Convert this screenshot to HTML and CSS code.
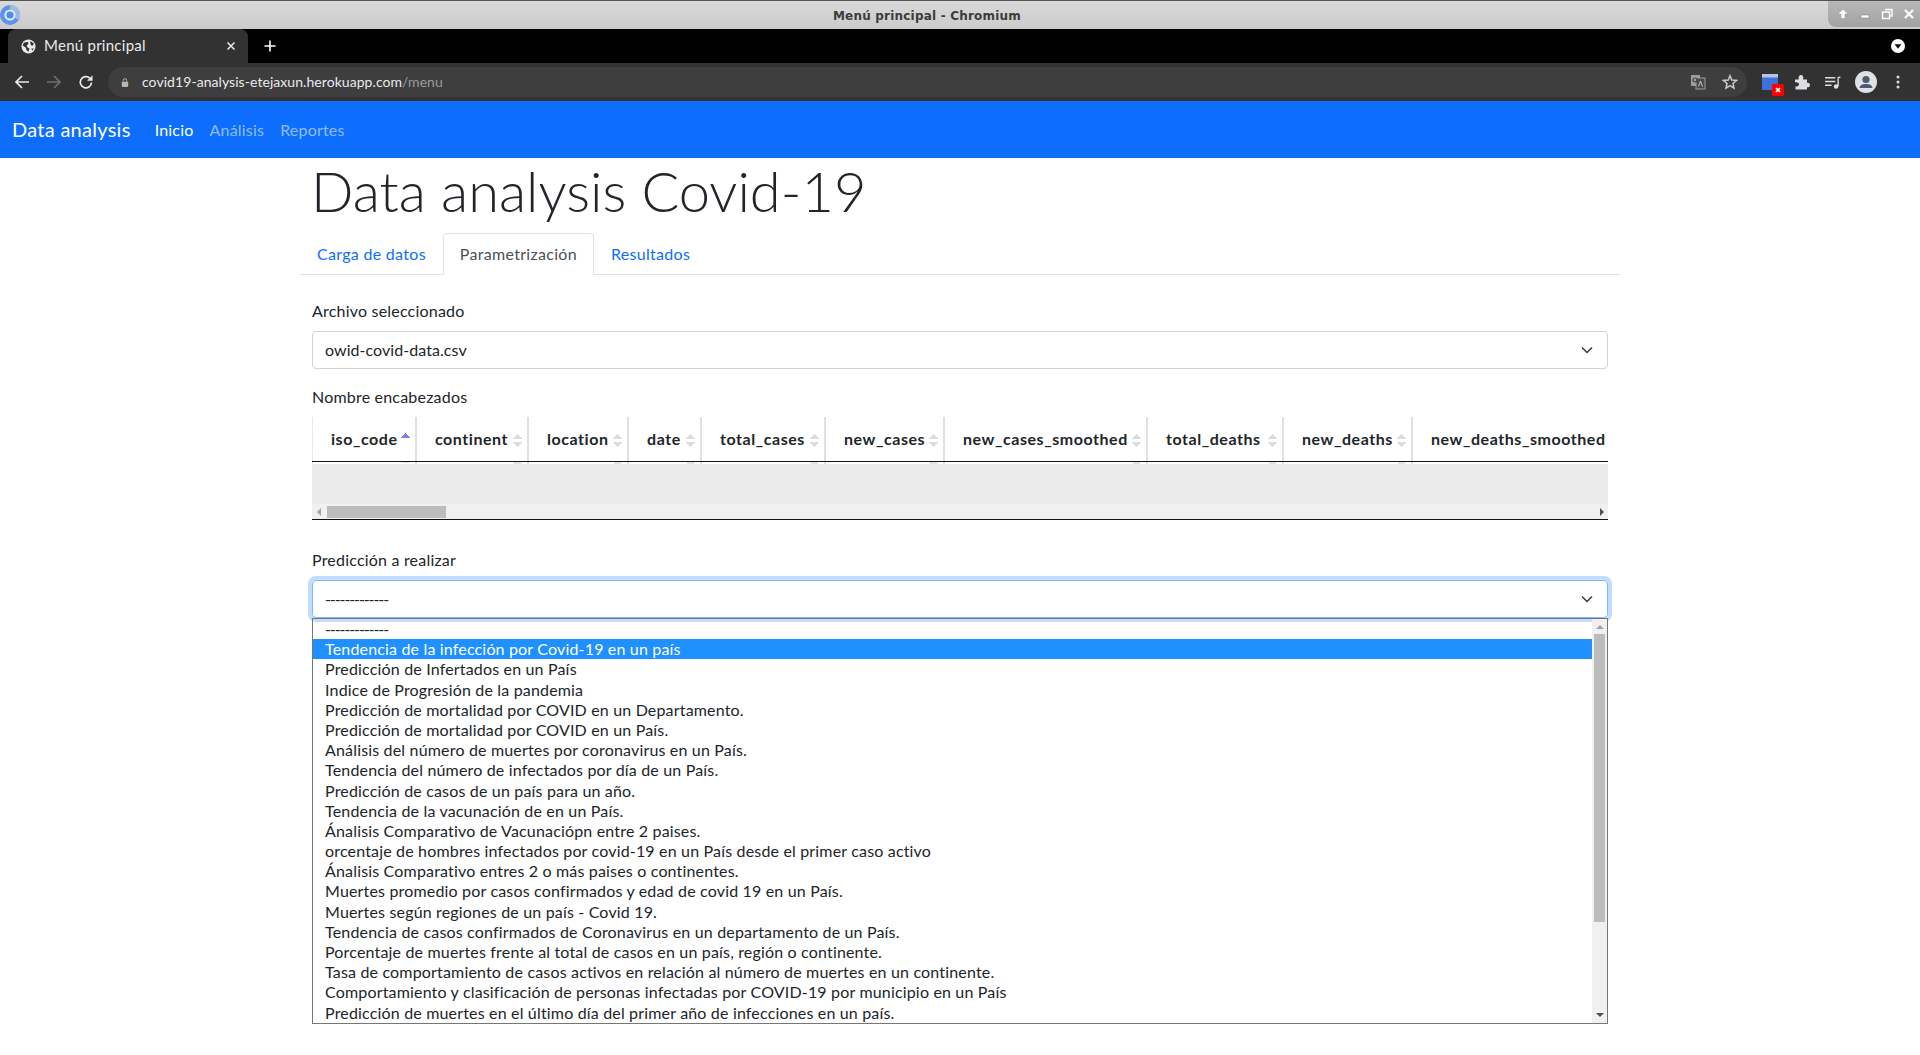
FILE: index.html
```html
<!DOCTYPE html>
<html lang="es">
<head>
    <meta charset="UTF-8">
    <title>Menú principal</title>
    <link rel="stylesheet" href="styles.css">
</head>
<body>

<div class="titlebar">
    <svg class="app-logo" viewBox="0 0 20 20"><circle cx="10" cy="10" r="10" fill="#5c93ee"/><path d="M10 0 A10 10 0 0 1 18.7 15 L10 10 Z" fill="#9db9e6"/><circle cx="10" cy="10" r="5.6" fill="#e4e9f2"/><circle cx="10" cy="10" r="3.6" fill="#4d8df0"/></svg>
    <span class="window-title">Menú principal - Chromium</span>
    <div class="window-btns">
        <svg viewBox="0 0 12 12"><path d="M6 1 L11 6 H8 V10.5 H4 V6 H1 Z" fill="#fff" stroke="#8a8a8a" stroke-width=".4"/></svg>
        <svg viewBox="0 0 12 12"><rect x="2" y="7" width="8" height="3" fill="#fff" stroke="#777" stroke-width=".5"/></svg>
        <svg viewBox="0 0 12 12"><path d="M4 1.5 H11 V8 H8.5 M1.5 4 H8.5 V10.5 H1.5 Z" fill="none" stroke="#fff" stroke-width="1.4"/></svg>
        <svg viewBox="0 0 12 12"><path d="M2 2 L10 10 M10 2 L2 10" stroke="#fff" stroke-width="2.2"/></svg>
    </div>
</div>

<div class="tabstrip">
    <div class="tab">
        <svg class="tab-globe" viewBox="0 0 16 16"><circle cx="8" cy="8" r="7.5" fill="#e8eaed"/><path d="M3 4 L7 2.8 L8 5 L6 7 L7 9 L9 10 L8 13.5 L6 12 L5 9 L1.8 7 Z M10 2 L13.5 4.5 L13 7 L11 7 L10 5 Z M11 10 L13.5 10 L12 12.5 Z" fill="#323232"/></svg>
        <span class="tab-title">Menú principal</span>
        <svg class="tab-close" viewBox="0 0 10 10"><path d="M1.5 1.5 L8.5 8.5 M8.5 1.5 L1.5 8.5" stroke="#e8eaed" stroke-width="1.5"/></svg>
    </div>
    <svg class="new-tab" viewBox="0 0 12 12"><path d="M6 0.5 V11.5 M0.5 6 H11.5" stroke="#fff" stroke-width="1.6"/></svg>
    <svg class="tab-search" viewBox="0 0 16 16"><circle cx="8" cy="8" r="8" fill="#fff"/><path d="M4 6 H12 L8 11 Z" fill="#111"/></svg>
</div>

<div class="toolbar">
    <svg class="tool-icon" viewBox="0 0 16 16"><path d="M15 8 H2 M8 2 L2 8 L8 14" fill="none" stroke="#e8eaed" stroke-width="1.7"/></svg>
    <svg class="tool-icon" viewBox="0 0 16 16"><path d="M1 8 H14 M8 2 L14 8 L8 14" fill="none" stroke="#6f7072" stroke-width="1.7"/></svg>
    <svg class="tool-icon" viewBox="0 0 16 16"><path d="M13.5 8.5 A5.6 5.6 0 1 1 11.8 4.2" fill="none" stroke="#e8eaed" stroke-width="1.7"/><path d="M14.5 1.2 V6.8 H9 Z" fill="#e8eaed"/></svg>
    <div class="omnibox">
        <svg class="lock" viewBox="0 0 10 12"><path d="M2.8 5 V3.4 A2.2 2.2 0 0 1 7.2 3.4 V5" fill="none" stroke="#b5b7ba" stroke-width="1.2"/><rect x="1" y="5" width="8" height="6.5" rx="1" fill="#b5b7ba"/></svg>
        <span class="url">covid19-analysis-etejaxun.herokuapp.com<span class="url-path">/menu</span></span>
        <svg class="omni-icon" viewBox="0 0 16 16"><rect x="1" y="1" width="9" height="11" fill="#9a9c9f"/><rect x="6" y="4" width="9" height="11" fill="#4a4a4a" stroke="#9a9c9f"/><path d="M8.5 12.5 L10.5 7 L12.5 12.5" fill="none" stroke="#c5c7ca"/><circle cx="5" cy="6" r="2" fill="none" stroke="#444" stroke-width="1.2"/></svg>
        <svg class="omni-icon star" viewBox="0 0 16 16"><path d="M8 1.8 L9.8 6.1 L14.5 6.5 L11 9.5 L12 14.1 L8 11.7 L4 14.1 L5 9.5 L1.5 6.5 L6.2 6.1 Z" fill="none" stroke="#c8cacd" stroke-width="1.5"/></svg>
    </div>
    <svg class="ext-icon" viewBox="0 0 22 22"><rect x="0" y="0" width="16" height="16" fill="#3f6fd8"/><rect x="0" y="0" width="16" height="3.5" fill="#b4c4e2"/><rect x="10" y="10" width="12" height="12" rx="1.5" fill="#f00"/><path d="M14 14 L18 18 M18 14 L14 18" stroke="#fff" stroke-width="1.6"/></svg>
    <svg class="puzzle" viewBox="0 0 16 16"><path d="M1 5.5 H4.8 C4.2 3 5.2 1 7 1 C8.8 1 9.8 3 9.2 5.5 H13 V8.8 C15 8.2 16 9.6 16 11 C16 12.4 15 13.8 13 13.2 V15.5 H1.5 V12.2 C3.6 12.8 5 11.8 5 10.3 C5 8.8 3.4 7.8 1 8.4 Z" fill="#dcdee1"/></svg>
    <svg class="media" viewBox="0 0 18 16"><path d="M1 3 H12 M1 7 H12 M1 11 H8" stroke="#dcdee1" stroke-width="1.5"/><path d="M15 2.5 V12" stroke="#dcdee1" stroke-width="1.5"/><path d="M15 2.5 H17.5" stroke="#dcdee1" stroke-width="1.5"/><circle cx="12.8" cy="12.3" r="2.4" fill="#dcdee1"/></svg>
    <svg class="avatar" viewBox="0 0 22 22"><circle cx="11" cy="11" r="11" fill="#dfe1e5"/><circle cx="11" cy="8.5" r="3.6" fill="#4d5b70"/><path d="M4.5 17 C5 13.5 8 13 11 13 C14 13 17 13.5 17.5 17 Z" fill="#4d5b70"/></svg>
    <svg class="kebab" viewBox="0 0 4 16"><circle cx="2" cy="3" r="1.5" fill="#dcdee1"/><circle cx="2" cy="8" r="1.5" fill="#dcdee1"/><circle cx="2" cy="13" r="1.5" fill="#dcdee1"/></svg>
</div>

<nav class="navbar">
    <a class="brand">Data analysis</a>
    <a class="nav-link active">Inicio</a>
    <a class="nav-link">Análisis</a>
    <a class="nav-link">Reportes</a>
</nav>

<main class="container">
    <h1>Data analysis Covid-19</h1>

    <div class="tabs">
        <a class="tab-link">Carga de datos</a>
        <a class="tab-link current">Parametrización</a>
        <a class="tab-link">Resultados</a>
    </div>

    <div class="form-panel">
        <label class="field-label">Archivo seleccionado</label>
        <div class="select-box">
            <span class="select-value">owid-covid-data.csv</span>
            <svg class="chevron" viewBox="0 0 16 16"><path d="M3 5.5 L8 10.5 L13 5.5" fill="none" stroke="#343a40" stroke-width="1.5"/></svg>
        </div>

        <label class="field-label second">Nombre encabezados</label>
        <div class="data-table">
            <div class="head-row">
                <div class="th">iso_code<span class="sort asc"></span></div>
                <div class="th">continent<span class="sort"></span></div>
                <div class="th">location<span class="sort"></span></div>
                <div class="th">date<span class="sort"></span></div>
                <div class="th">total_cases<span class="sort"></span></div>
                <div class="th">new_cases<span class="sort"></span></div>
                <div class="th">new_cases_smoothed<span class="sort"></span></div>
                <div class="th">total_deaths<span class="sort"></span></div>
                <div class="th">new_deaths<span class="sort"></span></div>
                <div class="th last">new_deaths_smoothed</div>
            </div>
            <div class="empty-body"></div>
            <div class="h-scroll">
                <span class="arrow-left"></span>
                <span class="h-thumb"></span>
                <span class="arrow-right"></span>
            </div>
        </div>

        <label class="field-label third">Predicción a realizar</label>
        <div class="select-box focused">
            <span class="select-value dashes">-------------</span>
            <svg class="chevron" viewBox="0 0 16 16"><path d="M3 5.5 L8 10.5 L13 5.5" fill="none" stroke="#343a40" stroke-width="1.5"/></svg>
        </div>
        <div class="listbox">
            <ul class="options">
                <li class="dashes">-------------</li>
                <li class="selected">Tendencia de la infección por Covid-19 en un país</li>
                <li>Predicción de Infertados en un País</li>
                <li>Indice de Progresión de la pandemia</li>
                <li>Predicción de mortalidad por COVID en un Departamento.</li>
                <li>Predicción de mortalidad por COVID en un País.</li>
                <li>Análisis del número de muertes por coronavirus en un País.</li>
                <li>Tendencia del número de infectados por día de un País.</li>
                <li>Predicción de casos de un país para un año.</li>
                <li>Tendencia de la vacunación de en un País.</li>
                <li>Ánalisis Comparativo de Vacunaciópn entre 2 paises.</li>
                <li>orcentaje de hombres infectados por covid-19 en un País desde el primer caso activo</li>
                <li>Ánalisis Comparativo entres 2 o más paises o continentes.</li>
                <li>Muertes promedio por casos confirmados y edad de covid 19 en un País.</li>
                <li>Muertes según regiones de un país - Covid 19.</li>
                <li>Tendencia de casos confirmados de Coronavirus en un departamento de un País.</li>
                <li>Porcentaje de muertes frente al total de casos en un país, región o continente.</li>
                <li>Tasa de comportamiento de casos activos en relación al número de muertes en un continente.</li>
                <li>Comportamiento y clasificación de personas infectadas por COVID-19 por municipio en un País</li>
                <li>Predicción de muertes en el último día del primer año de infecciones en un país.</li>
            </ul>
            <div class="v-scroll">
                <span class="arrow-up"></span>
                <span class="v-thumb"></span>
                <span class="arrow-down"></span>
            </div>
        </div>
    </div>
</main>

</body>
</html>
```

FILE: styles.css
```css
* {
    box-sizing: border-box;
}

html, body {
    margin: 0;
    height: 1055px;
    overflow: hidden;
}

body {
    font-family: 'Lato', 'Noto Sans', sans-serif;
    font-size: 16px;
    color: #212529;
    background-color: #fff;
}

/* browser chrome */
.titlebar {
    height: 29px;
    display: flex;
    align-items: center;
    justify-content: center;
    position: relative;
    padding: 1px 66px 0 0;
    border-top: 1px solid #555;
    background: linear-gradient(#d9d9d9, #cbcbcb);
}

.app-logo {
    position: absolute;
    left: 0;
    top: 4px;
    width: 20px;
    height: 20px;
}

.window-title {
    font-family: 'DejaVu Sans', sans-serif;
    font-size: 12px;
    font-weight: bold;
    color: #3c3c3c;
    letter-spacing: 0.2px;
}

.window-btns {
    position: absolute;
    right: 0;
    top: 0;
    width: 92px;
    height: 26px;
    display: flex;
    align-items: center;
    gap: 10px;
    padding-left: 9px;
    background: linear-gradient(#b8b8b8, #a2a2a2);
    border-bottom-left-radius: 8px;
}

.window-btns svg {
    width: 12px;
    height: 12px;
}

.tabstrip {
    height: 34px;
    background-color: #000;
    display: flex;
    align-items: flex-end;
    position: relative;
    padding-left: 8px;
}

.tab {
    width: 240px;
    height: 34px;
    background-color: #323232;
    border-radius: 8px 8px 0 0;
    display: flex;
    align-items: center;
    padding: 0 12px;
}

.tab-globe {
    width: 15px;
    height: 15px;
    margin-left: 1px;
}

.tab-title {
    font-size: 15px;
    color: #e8eaed;
    margin: 0 0 2px 8px;
    letter-spacing: 0.26px;
    flex: 1;
}

.tab-close {
    width: 10px;
    height: 10px;
}

.new-tab {
    width: 12px;
    height: 12px;
    margin: 0 0 11px 16px;
}

.tab-search {
    position: absolute;
    right: 15px;
    top: 10px;
    width: 14px;
    height: 14px;
}

.toolbar {
    height: 38px;
    background-color: #323232;
    display: flex;
    align-items: center;
    padding-left: 14px;
}

.tool-icon {
    width: 16px;
    height: 16px;
    margin-right: 16px;
}

.omnibox {
    width: 1639px;
    height: 30px;
    margin-left: -2px;
    background-color: #3e3e3e;
    border-radius: 15px;
    display: flex;
    align-items: center;
    padding-left: 13px;
    padding-right: 9px;
}

.lock {
    width: 8px;
    height: 11px;
}

.url {
    font-size: 14px;
    color: #e8eaed;
    margin: 0 0 2px 13px;
    letter-spacing: 0.06px;
    flex: 1;
}

.url-path {
    color: #9a9c9f;
}

.omni-icon {
    width: 16px;
    height: 16px;
    margin-right: 16px;
}

.omni-icon.star {
    margin-right: 0;
}

.ext-icon {
    width: 22px;
    height: 22px;
    margin: 6px 0 0 15px;
}

.puzzle {
    width: 16px;
    height: 16px;
    margin-left: 10px;
}

.media {
    width: 17px;
    height: 15px;
    margin-left: 14px;
}

.avatar {
    width: 22px;
    height: 22px;
    margin-left: 14px;
}

.kebab {
    width: 4px;
    height: 16px;
    margin-left: 19px;
}

/* page */
.navbar {
    height: 57px;
    background-color: #0d6efd;
    display: flex;
    align-items: center;
    padding-left: 12px;
}

.brand {
    font-size: 20px;
    letter-spacing: 0.28px;
    color: #fff;
    margin: 0 16px 2px 0;
}

.nav-link {
    padding: 0 8px;
    letter-spacing: 0.2px;
    color: rgba(255, 255, 255, 0.55);
}

.nav-link.active {
    color: #fff;
}

.container {
    width: 1320px;
    margin: 0 auto;
}

h1 {
    margin: 0 0 0 11px;
    font-size: 56px;
    font-weight: 300;
    line-height: 65px;
    height: 75px;
}

.tabs {
    display: flex;
    height: 42px;
    border-bottom: 1px solid #dee2e6;
}

.tab-link {
    padding: 0 16px;
    line-height: 40px;
    letter-spacing: 0.3px;
    color: #0d6efd;
    border: 1px solid transparent;
    border-bottom: 0;
    height: 42px;
}

.tab-link.current {
    color: #495057;
    background-color: #fff;
    border-color: #dee2e6;
    border-radius: 4px 4px 0 0;
}

.form-panel {
    padding: 24px 12px 0 12px;
}

.field-label {
    display: block;
    height: 32px;
    line-height: 24px;
    letter-spacing: 0.2px;
}

.field-label.second {
    margin-top: 16px;
}

.field-label.third {
    margin-top: 28px;
}

.select-box {
    height: 38px;
    border: 1px solid #ced4da;
    border-radius: 4px;
    display: flex;
    align-items: center;
    justify-content: space-between;
    padding: 0 12px;
}

.select-box.focused {
    border-color: #86b7fe;
    box-shadow: 0 0 0 4px rgba(13, 110, 253, 0.25);
}

.select-value {
    letter-spacing: 0.06px;
    margin-bottom: 2px;
}

.select-value.dashes {
    letter-spacing: -1.1px;
}

.chevron {
    width: 16px;
    height: 16px;
}

.data-table {
    height: 103px;
    border-bottom: 1px solid #111;
}

.head-row {
    display: grid;
    grid-template-columns: 104px 112px 100px 73px 124px 119px 203px 136px 129px 1fr;
    height: 47px;
    position: relative;
    border-left: 1px solid #e8e8e8;
}

.head-row::after {
    content: '';
    position: absolute;
    left: -1px;
    right: 0;
    top: 44px;
    height: 1px;
    background-color: #111;
}

.th {
    font-weight: bold;
    line-height: 44px;
    letter-spacing: 0.55px;
    padding-left: 18px;
    position: relative;
    white-space: nowrap;
    border-right: 2px solid #dee2e6;
}

.th:first-child {
    padding-left: 18px;
}

.th.last {
    border-right: 0;
    padding-left: 18px;
    overflow: hidden;
}

.sort {
    position: absolute;
    right: 5px;
    top: 16px;
    width: 9px;
    height: 15px;
    background:
        linear-gradient(to bottom right, transparent 50%, #dcdcdc 50%) 0 0 / 5px 6px no-repeat,
        linear-gradient(to bottom left, transparent 50%, #dcdcdc 50%) 4px 0 / 5px 6px no-repeat,
        linear-gradient(to top right, transparent 50%, #dcdcdc 50%) 0 9px / 5px 6px no-repeat,
        linear-gradient(to top left, transparent 50%, #dcdcdc 50%) 4px 9px / 5px 6px no-repeat;
}

.sort::after {
    content: '';
    position: absolute;
    left: 1px;
    right: 1px;
    top: 29px;
    height: 2px;
    background-color: #e4e4e4;
}

.sort.asc {
    top: 15px;
    height: 7px;
    background:
        linear-gradient(to bottom right, transparent 50%, #7a80e0 50%) 0 0 / 5px 6px no-repeat,
        linear-gradient(to bottom left, transparent 50%, #7a80e0 50%) 4px 0 / 5px 6px no-repeat;
}

.empty-body {
    height: 40px;
    background-color: #ebebeb;
}

.h-scroll {
    height: 15px;
    background-color: #f0f0f0;
    display: flex;
    align-items: center;
    padding: 0 4px 0 5px;
}

.h-thumb {
    width: 119px;
    height: 12px;
    margin-left: 6px;
    background-color: #bcbcbc;
}

.arrow-left, .arrow-right, .arrow-up, .arrow-down {
    width: 0;
    height: 0;
    border: 4px solid transparent;
}

.arrow-left {
    border-left-width: 0;
    border-right-color: #a3a3a3;
}

.arrow-right {
    border-right-width: 0;
    border-left-color: #505050;
    margin-left: auto;
}

.listbox {
    height: 406px;
    border: 1px solid #767676;
    display: flex;
}

.options {
    list-style: none;
    margin: 0;
    padding: 0;
    flex: 1;
    letter-spacing: 0.17px;
}

.options li {
    height: 20.2px;
    line-height: 19px;
    padding-left: 12px;
    white-space: nowrap;
}

.options li.dashes {
    letter-spacing: -1.1px;
}

.options li.selected {
    background-color: #1e90ff;
    color: #fff;
}

.v-scroll {
    width: 15px;
    background-color: #f0f0f0;
    display: flex;
    flex-direction: column;
    align-items: center;
    padding: 6px 0;
}

.v-thumb {
    width: 11px;
    height: 288px;
    margin-top: 5px;
    background-color: #bcbcbc;
}

.arrow-up {
    border-top-width: 0;
    border-bottom-color: #a3a3a3;
}

.arrow-down {
    border-bottom-width: 0;
    border-top-color: #505050;
    margin-top: auto;
}
```
